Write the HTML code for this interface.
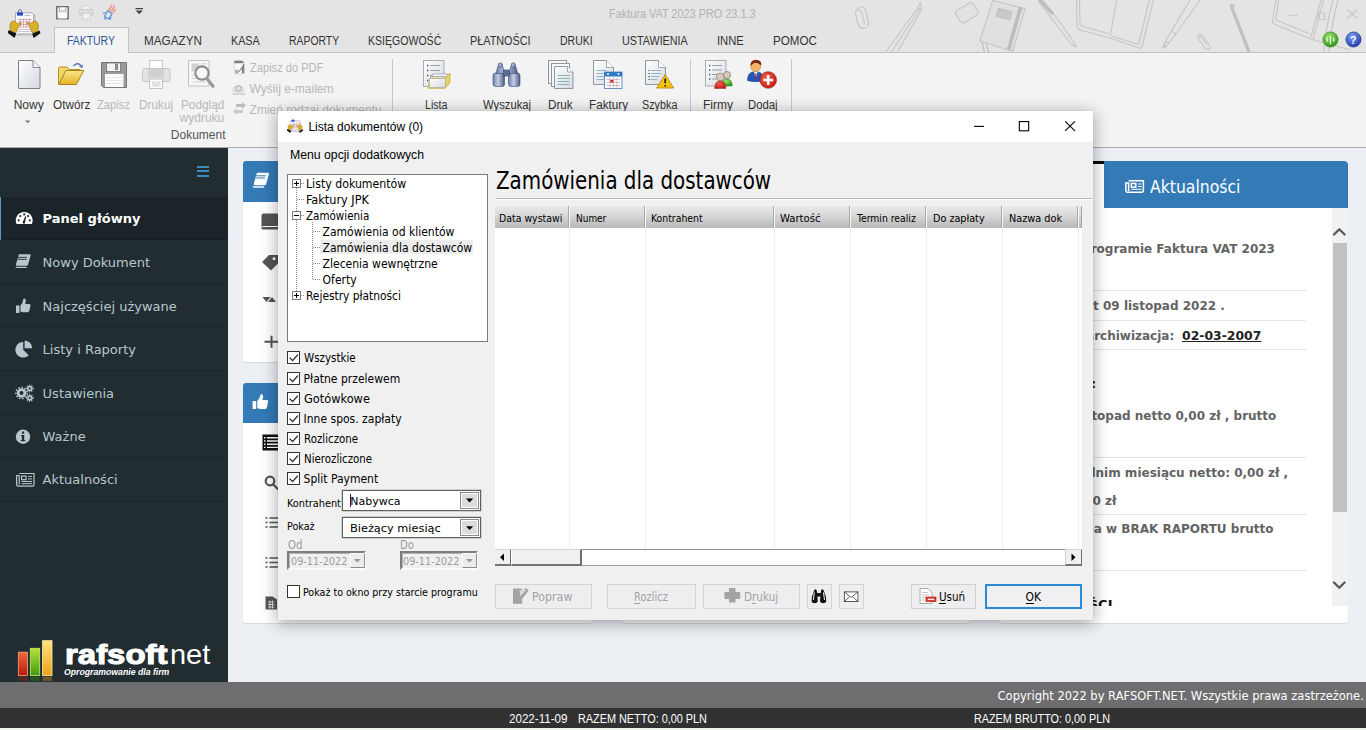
<!DOCTYPE html>
<html lang="pl">
<head>
<meta charset="utf-8">
<title>Faktura VAT 2023 PRO 23.1.3</title>
<style>
*{box-sizing:border-box;margin:0;padding:0}
html,body{width:1366px;height:730px;overflow:hidden}
body{position:relative;background:#ecf0f5;font-family:"Liberation Sans",sans-serif;font-size:12px;color:#222}
.t{position:absolute;white-space:nowrap;line-height:1}
.layer{position:absolute;left:0;top:0;width:1366px;height:730px;overflow:hidden}
svg{overflow:visible}
</style>
</head>
<body>
<div class="layer" id="ribbonwrap">
<div style="position:absolute;left:0px;top:0px;width:1366px;height:52px;background:#e4e4e4"></div>
<svg class="sk" style="position:absolute;left:0;top:0" width="1366" height="52" viewBox="0 0 1366 52"><g fill="none" stroke="#c6c6c6" stroke-width="1.150" stroke-linecap="round" stroke-linejoin="round">
<path d="M858 9 q5 -5 7.500 1 l2.500 10 q1.500 8 -4 8.500 q-5 0 -6.500 -6 l-2 -9 q0 -5 4 -3.500 q2 1 3 5 l2 9"/>
<path d="M886 52 L917.500 8 L920.500 2.500 L921.500 9.500 L897.600 52 M891.500 52 L919.500 9 M917.500 8 L921.500 9.500"/>
<path d="M957 10.500 l12 -7.500 q3 -1.500 5 1.500 l3.500 6 q1.500 3 -1 4.800 l-11.500 7 q-3 1.500 -5 -1.500 l-4 -6 q-1.500 -2.500 1 -4.300z" fill="#e1e1e1"/>
<path d="M992.700 .500 L1025 8.600 L1012.700 51.400 L979.800 41 Z" fill="#e0e0e0"/>
<path d="M1020.500 7.500 L1008.500 50.300" stroke="#bcbcbc" stroke-width="3.600" stroke-linecap="butt"/>
<path d="M998.500 8.300 l13.500 3.500 l-2.300 8 l-13.500 -3.500z" fill="#c9c9c9" stroke="#c2c2c2"/>
<path d="M982 42 l2.500 10 M986 43 l2.500 9" stroke="#bdbdbd"/>
<path d="M1042 0 L1053 13 L1074 42 L1076 47 L1071 44 L1049 15 L1039 2" />
<path d="M1040 0 L1052 13" stroke="#bdbdbd" stroke-width="3.500"/>
<path d="M1076.500 0 L1077 27 q.500 2 3 3 L1110 38 L1116.600 0 M1110 38 L1139 48 q2.500 .500 3.200 -2 L1153.400 0 M1079.500 0 L1080 25.500 L1108 33.500 M1113 36.500 L1138.500 44.500 L1149.500 0"/>
<path d="M1200 0 L1176 34 L1166 46.500 L1163 47.700 L1164 44 L1171.500 31 L1190 0 M1171.500 31 L1176 34 M1165.500 41 L1169 43.500"/>
<path d="M1163 47.700 L1166 46.500 L1164 44z" fill="#c4c4c4"/>
<path d="M1197 36.500 q3 -4 6 0 l6.500 9 q2 3.500 -1.500 4 q-2 0 -3.500 -2 l-6 -8.500 q-1 -2 1 -2.500 q1.500 0 2.500 1.500 l4.500 6.500"/>
<path d="M1232 8 L1249 52" stroke="#c0c0c0" stroke-width="3.400"/><path d="M1230.500 6 q1.500 -2 3.500 0" stroke="#c0c0c0" stroke-width="2"/>
<path d="M1275.800 0 L1272.600 21 q0 2.500 2 3.300 L1310.500 39 L1321 0 M1310.500 39 L1349.500 49.800 M1313 39.800 L1323.500 0 M1333 0 q-7 26 -9.500 52 M1338 0 q-7 26 -9 52 M1278.500 0 L1276 20 L1309 33.500"/>
<path d="M1288 15.200 h9.500 M1318 13 h6.600 v6.500 h-6.600z M1347.500 9.800 l9.500 8.600 m0 -8.600 l-9.500 8.600"/>
</g></svg>
<div style="position:absolute;left:0px;top:52px;width:1366px;height:95px;background:#f4f3f4;border-top:1px solid #c3c3c3"></div>
<div style="position:absolute;left:0px;top:147px;width:1366px;height:1px;background:#a9a9a9"></div>
<div style="position:absolute;left:54px;top:27px;width:75px;height:26px;background:#f4f3f4;border:1px solid #c3c3c3;border-bottom:none"></div>
<span class="t" style="left:67.3px;top:35.0px;font:12px 'Liberation Sans',sans-serif;line-height:1;color:#2b579a;transform:scaleX(0.869);transform-origin:0 0;">FAKTURY</span>
<span class="t" style="left:144.1px;top:35.0px;font:12px 'Liberation Sans',sans-serif;line-height:1;color:#333;transform:scaleX(0.976);transform-origin:0 0;">MAGAZYN</span>
<span class="t" style="left:231.3px;top:35.0px;font:12px 'Liberation Sans',sans-serif;line-height:1;color:#333;transform:scaleX(0.896);transform-origin:0 0;">KASA</span>
<span class="t" style="left:288.9px;top:35.0px;font:12px 'Liberation Sans',sans-serif;line-height:1;color:#333;transform:scaleX(0.867);transform-origin:0 0;">RAPORTY</span>
<span class="t" style="left:367.7px;top:35.0px;font:12px 'Liberation Sans',sans-serif;line-height:1;color:#333;transform:scaleX(0.879);transform-origin:0 0;">KSIĘGOWOŚĆ</span>
<span class="t" style="left:470.0px;top:35.0px;font:12px 'Liberation Sans',sans-serif;line-height:1;color:#333;transform:scaleX(0.903);transform-origin:0 0;">PŁATNOŚCI</span>
<span class="t" style="left:560.0px;top:35.0px;font:12px 'Liberation Sans',sans-serif;line-height:1;color:#333;transform:scaleX(0.873);transform-origin:0 0;">DRUKI</span>
<span class="t" style="left:622.2px;top:35.0px;font:12px 'Liberation Sans',sans-serif;line-height:1;color:#333;transform:scaleX(0.896);transform-origin:0 0;">USTAWIENIA</span>
<span class="t" style="left:717.2px;top:35.0px;font:12px 'Liberation Sans',sans-serif;line-height:1;color:#333;transform:scaleX(0.935);transform-origin:0 0;">INNE</span>
<span class="t" style="left:773.0px;top:35.0px;font:12px 'Liberation Sans',sans-serif;line-height:1;color:#333;transform:scaleX(0.966);transform-origin:0 0;">POMOC</span>
<span class="t" style="left:609.4px;top:8.0px;font:12px 'Liberation Sans',sans-serif;line-height:1;color:#b2b2b2;transform:scaleX(0.908);transform-origin:0 0;">Faktura VAT 2023 PRO 23.1.3</span>
<span class="t" style="left:13.7px;top:99.0px;font:12px 'Liberation Sans',sans-serif;line-height:1;color:#333;">Nowy</span>
<span class="t" style="left:52.7px;top:99.0px;font:12px 'Liberation Sans',sans-serif;line-height:1;color:#333;transform:scaleX(0.981);transform-origin:0 0;">Otwórz</span>
<span class="t" style="left:97.0px;top:99.0px;font:12px 'Liberation Sans',sans-serif;line-height:1;color:#b7b7b7;transform:scaleX(0.934);transform-origin:0 0;">Zapisz</span>
<span class="t" style="left:138.8px;top:99.0px;font:12px 'Liberation Sans',sans-serif;line-height:1;color:#b7b7b7;transform:scaleX(0.986);transform-origin:0 0;">Drukuj</span>
<span class="t" style="left:180.7px;top:99.0px;font:12px 'Liberation Sans',sans-serif;line-height:1;color:#b7b7b7;transform:scaleX(0.983);transform-origin:0 0;">Podgląd</span>
<span class="t" style="left:179.6px;top:112.0px;font:12px 'Liberation Sans',sans-serif;line-height:1;color:#b7b7b7;">wydruku</span>
<span class="t" style="left:170.8px;top:129.0px;font:12px 'Liberation Sans',sans-serif;line-height:1;color:#555;">Dokument</span>
<span class="t" style="left:249.6px;top:62.0px;font:12px 'Liberation Sans',sans-serif;line-height:1;color:#b7b7b7;transform:scaleX(0.925);transform-origin:0 0;">Zapisz do PDF</span>
<span class="t" style="left:249.6px;top:83.0px;font:12px 'Liberation Sans',sans-serif;line-height:1;color:#b7b7b7;">Wyślij e-mailem</span>
<span class="t" style="left:249.6px;top:104.0px;font:12px 'Liberation Sans',sans-serif;line-height:1;color:#b7b7b7;">Zmień rodzaj dokumentu</span>
<span class="t" style="left:424.8px;top:99.0px;font:12px 'Liberation Sans',sans-serif;line-height:1;color:#333;transform:scaleX(0.887);transform-origin:0 0;">Lista</span>
<span class="t" style="left:482.5px;top:99.0px;font:12px 'Liberation Sans',sans-serif;line-height:1;color:#333;transform:scaleX(0.939);transform-origin:0 0;">Wyszukaj</span>
<span class="t" style="left:548.0px;top:99.0px;font:12px 'Liberation Sans',sans-serif;line-height:1;color:#333;transform:scaleX(0.975);transform-origin:0 0;">Druk</span>
<span class="t" style="left:589.0px;top:99.0px;font:12px 'Liberation Sans',sans-serif;line-height:1;color:#333;transform:scaleX(0.975);transform-origin:0 0;">Faktury</span>
<span class="t" style="left:642.4px;top:99.0px;font:12px 'Liberation Sans',sans-serif;line-height:1;color:#333;transform:scaleX(0.899);transform-origin:0 0;">Szybka</span>
<span class="t" style="left:703.0px;top:99.0px;font:12px 'Liberation Sans',sans-serif;line-height:1;color:#333;">Firmy</span>
<span class="t" style="left:747.5px;top:99.0px;font:12px 'Liberation Sans',sans-serif;line-height:1;color:#333;transform:scaleX(0.941);transform-origin:0 0;">Dodaj</span>
<div style="position:absolute;left:391.5px;top:59px;width:1px;height:66px;background:#c9c9c9"></div>
<div style="position:absolute;left:690px;top:59px;width:1px;height:66px;background:#c9c9c9"></div>
<div style="position:absolute;left:791.3px;top:59px;width:1px;height:66px;background:#c9c9c9"></div>
<svg style="position:absolute;left:0;top:0" width="1366" height="148" viewBox="0 0 1366 148">
<defs>
<linearGradient id="gpage" x1="0" y1="0" x2="1" y2="1"><stop offset="0" stop-color="#ffffff"/><stop offset="1" stop-color="#d3d8df"/></linearGradient>
<linearGradient id="gfold" x1="0" y1="0" x2="0" y2="1"><stop offset="0" stop-color="#fbe58a"/><stop offset="1" stop-color="#e6b422"/></linearGradient>
<linearGradient id="gbino" x1="0" y1="0" x2="1" y2="0"><stop offset="0" stop-color="#6f7fa8"/><stop offset=".45" stop-color="#c5cde3"/><stop offset="1" stop-color="#4d5c88"/></linearGradient>
<radialGradient id="gred" cx=".4" cy=".35" r=".7"><stop offset="0" stop-color="#f0604f"/><stop offset="1" stop-color="#c4160c"/></radialGradient>
<radialGradient id="ggreen" cx=".4" cy=".3" r=".7"><stop offset="0" stop-color="#9fe36a"/><stop offset="1" stop-color="#2f9a16"/></radialGradient>
<radialGradient id="gblue" cx=".4" cy=".3" r=".7"><stop offset="0" stop-color="#7fa3ee"/><stop offset="1" stop-color="#1f3fb0"/></radialGradient>
</defs>
<!-- app icon -->
<g>
<path d="M19 14 h14 l2 1.500 v19 h-16z" fill="#e6e6ea" stroke="#9a9aa8" stroke-width=".700"/>
<path d="M15.500 12.800 h16.500 l1.500 1.500 v20.500 h-18z" fill="#fafafc" stroke="#9a9aa8" stroke-width=".800"/>
<rect x="17" y="12.400" width="6" height="3.200" fill="#2446c8"/><path d="M18.400 12.300 v-1.500 q1.600 -3 3.200 0 v1.500" fill="none" stroke="#4a5a8a" stroke-width="1"/>
<path d="M24.500 15.500 h6" stroke="#9ab" stroke-width=".800"/>
<path d="M18 19.500 h13.500 M18 22 h13.500 M18 24.500 h13.500 M18 27 h13.500 M20.500 18.500 v9 M23.500 18.500 v9 M26.500 18.500 v9 M29.500 18.500 v9" stroke="#cf8f9f" stroke-width=".700"/>
<path d="M18 29.500 h13.500 M18 31.500 h13.500 M18 33.500 h13.500" stroke="#b9b9bf" stroke-width=".800"/>
<path d="M9.800 27 q.200 -5.500 3.300 -6 q2.500 0 4.500 2.800 l3.300 -1.500 l.500 1.200 l-2.800 3 l-2.600 6.500 l-5.200 -1.800z" fill="#d9b02a" stroke="#8f7010" stroke-width=".600"/>
<path d="M38.500 27 q-.200 -5.500 -3.300 -6 q-2.500 0 -4.500 2.800 l-3.300 -1.500 l-.500 1.200 l2.800 3 l2.600 6.500 l5.200 -1.800z" fill="#d9b02a" stroke="#8f7010" stroke-width=".600"/>
<path d="M8.600 30 l7.700 3.500 l-1.800 4.400 l-6.700 -5z M39.800 30.500 l-7.700 3.300 l1.600 4.200 l6.700 -4.800z" fill="#141414"/>
</g>
<!-- QAT -->
<g opacity=".85"><rect x="56.700" y="6.700" width="11.500" height="12" fill="#ececec" stroke="#5c5c5c" stroke-width="1.400"/><rect x="59.5" y="7" width="6" height="4" fill="#fff" stroke="#777" stroke-width=".6"/><rect x="58.5" y="13" width="8" height="5.5" fill="#fff"/></g>
<g opacity=".55"><rect x="82" y="6" width="8" height="4" fill="#fff" stroke="#aaa" stroke-width=".6"/><rect x="79.5" y="9.5" width="13.5" height="6" rx="1" fill="#d6d6d6" stroke="#aaa" stroke-width=".6"/><rect x="82.5" y="13.5" width="7.5" height="5.5" fill="#fff" stroke="#aaa" stroke-width=".6"/></g>
<g stroke-width="1.300" fill="none" opacity=".9"><path d="M104.500 16.500 l3 -5.500 l4.500 2.500 l-3 5.500z M103 13.500 l2.500 -1 M110 19.500 l1 -2.300 M106 19.500 l-1.800 -1.200" stroke="#4a8ee0"/><path d="M108.500 11 l3.500 -6 M111 12.300 l3.500 -6.500 M113.300 13 l2 -4" stroke="#f08a7a" stroke-width="1.500"/></g>
<path d="M135.5 8 h7.5 v1.2 h-7.5z M135.6 10.6 h7.3 l-3.65 3.6z" fill="#444"/>
<!-- right small buttons -->
<circle cx="1330.5" cy="39.5" r="7.6" fill="url(#ggreen)" stroke="#2a7a12" stroke-width=".6"/><path d="M1330.5 36 v8 M1327.6 37.5 q-1.4 2 0 4 M1333.4 37.5 q1.4 2 0 4" stroke="#fff" stroke-width="1.1" fill="none"/>
<circle cx="1353.5" cy="39.5" r="7.6" fill="url(#gblue)" stroke="#1a2f86" stroke-width=".6"/>
<!-- Nowy -->
<path d="M18.5 60.5 h14.5 l7 7 v21 h-21.5z" fill="url(#gpage)" stroke="#7d7f86"/><path d="M33 60.5 v7 h7" fill="#f3f4f7" stroke="#7d7f86" stroke-width=".9"/>
<path d="M25 120.4 h5.4 l-2.7 2.8z" fill="#7a7a7a"/>
<!-- Otworz -->
<path d="M58.5 84 v-15.5 q0 -1.5 1.5 -1.5 h7 l2.5 2.5 h10.5 v3" fill="#f3d667" stroke="#a98516" stroke-width=".9"/>
<path d="M58.8 84.5 l7 -14 h18 l-7.5 14z" fill="url(#gfold)" stroke="#9b7a12" stroke-width=".9"/>
<path d="M73.5 66 q4.5 -5 8 .5" fill="none" stroke="#6c86b8" stroke-width="1.6"/><path d="M79 66.8 l3.6 1.4 l.4 -4z" fill="#6c86b8"/>
<!-- Zapisz -->
<g><path d="M101.5 62.5 h25 v25 h-23 l-2 -2z" fill="#9a9a9a" stroke="#777"/><rect x="106.5" y="63" width="14" height="8.5" fill="#f3f3f3" stroke="#666" stroke-width=".7"/><rect x="115" y="63.6" width="3" height="6.5" fill="#8a8a8a"/><rect x="105" y="74" width="18.5" height="13" fill="#fbfbfb"/><path d="M106 77.5 h16.5 M106 80.5 h16.5 M106 83.5 h16.5" stroke="#e2e2e2" stroke-width=".8"/></g>
<!-- Drukuj -->
<g><rect x="149.5" y="60.5" width="13" height="8" fill="#fff" stroke="#c9c9c9"/><rect x="142.500" y="68.500" width="27.500" height="13" rx="2" fill="#e3e3e3" stroke="#c6c6c6"/><rect x="148" y="69" width="16" height="8.5" fill="#cfcfcf"/><rect x="149.5" y="79" width="13" height="9.500" fill="#fbfbfb" stroke="#c4c4c4"/><rect x="152" y="81.500" width="8.500" height="5" fill="#dcdcdc"/><path d="M152 86.500 l4 -4 l4.500 4" stroke="#f6f6f6" fill="none"/></g>
<!-- Podglad -->
<g><rect x="188.5" y="60.5" width="20.500" height="25.500" fill="#f7f7f7" stroke="#c2c2c2"/><rect x="191.5" y="63.500" width="7.500" height="8" fill="#d2d2d2"/><path d="M200.5 63.800 h6 M191.5 75 h14 M191.5 78.500 h14 M191.5 82 h14" stroke="#d3d3d3" stroke-width="1"/><circle cx="202" cy="73" r="6.600" fill="#f9f9f9" fill-opacity=".8" stroke="#8d8d8d" stroke-width="2.100"/><path d="M206.800 78.600 l6.200 7.600" stroke="#9a9a9a" stroke-width="3.200" stroke-linecap="round"/></g>
<!-- small disabled icons -->
<g fill="#bcbcbc"><path d="M234.300 60.800 h8 l2.300 2.300 v10.700 h-10.300z" fill="#fbfbfb" stroke="#cfcfcf" stroke-width=".700"/><path d="M234.300 60.800 h8 l1.500 1.500 v.900 h-9.500z" fill="#808080"/><path d="M235 73.200 q5.500 -2.500 8.500 -9.500 l.600 .300 v9.200 h-2.200 v-4.500 q-2 3 -4.600 4.500z" fill="#7e7e7e"/><path d="M235 70.500 l3.500 -1.200 l-2.800 3.600z" fill="#8a8a8a"/>
<ellipse cx="238.500" cy="90" rx="6.500" ry="5" fill="#e3e3e3"/><circle cx="238.500" cy="88.500" r="2.700" fill="none" stroke="#a9a9a9" stroke-width="1"/><rect x="232.500" y="93.500" width="13" height="1.500" fill="#d0d0d0"/>
<path d="M236 104 h6 v-2 l4 3.500 l-4 3.500 v-2 h-6z" fill="#bdbdbd"/><path d="M243 110 h-6 v-2 l-4 3.500 l4 3.500 v-2 h6z" fill="#c9c9c9"/></g>
<!-- Lista -->
<g><rect x="423.500" y="60.500" width="20.500" height="26" fill="url(#gpage)" stroke="#a9adb3"/><path d="M430 65.500 h10 M430 70.500 h10 M430 75.500 h6" stroke="#9a9fa8" stroke-width="1"/><path d="M427 65.500 h1.300 M427 70.500 h1.300 M427 75.500 h1.300 M427 80.500 h1.300" stroke="#444" stroke-width="1.300"/>
<path d="M432.500 74 h15 v10 h-15z" fill="#f4f5f8" stroke="#9ea2ab" stroke-width=".8"/><path d="M430.500 76.500 h15 v10 h-15z" fill="#f8f8fa" stroke="#9ea2ab" stroke-width=".8"/>
<path d="M428 88.300 l2 -10.300 h15.500 l4.500 -5 v10 l-5 5.300z" fill="#e9d45f" stroke="#bca62c" stroke-width=".7"/><path d="M429.500 78.500 h16 v9 h-16z" fill="url(#gpage)" stroke="#a5a59a" stroke-width=".6"/></g>
<!-- Wyszukaj -->
<g stroke="#3d4a75" stroke-width=".6"><rect x="493" y="73" width="11.500" height="13.500" rx="2.500" fill="url(#gbino)"/><rect x="508.500" y="73" width="11.500" height="13.500" rx="2.500" fill="url(#gbino)"/><path d="M496 73.500 l1.800 -7 h5 l1.800 7z M509 73.500 l1.800 -7 h5 l1.800 7z" fill="url(#gbino)"/><rect x="498.300" y="63" width="4" height="4" rx="1.500" fill="url(#gbino)"/><rect x="511.300" y="63" width="4" height="4" rx="1.500" fill="url(#gbino)"/><rect x="503.500" y="70" width="6" height="6" fill="#5e6c98"/></g>
<!-- Druk -->
<g stroke="#8f979c" stroke-width="1"><rect x="548.500" y="60.500" width="18" height="23" fill="#f6f7f8"/><rect x="551.500" y="63.500" width="18" height="23" fill="#f6f7f8"/><path d="M554.500 66.500 h13 l5.500 5.500 v16.500 h-18.500z" fill="url(#gpage)"/><path d="M567.500 66.500 v5.500 h5.500" fill="#fff" stroke-width=".8"/></g><path d="M557.500 75.500 h12 M557.500 78.500 h12 M557.500 81.500 h12 M557.500 84.500 h12" stroke="#7fb5b5" stroke-width="1"/>
<!-- Faktury -->
<g><path d="M593.500 60.500 h13 l7 7 v17 h-20z" fill="url(#gpage)" stroke="#8f979c"/><path d="M606.500 60.500 v7 h7" fill="#fff" stroke="#8f979c" stroke-width=".8"/><path d="M596.500 70.500 h10 M596.500 73.500 h8 M596.500 76.500 h8 M596.500 79.500 h8" stroke="#8fb7c9" stroke-width="1"/>
<rect x="604.500" y="72" width="17.500" height="16.500" fill="#fafbfd" stroke="#5c88b8" stroke-width=".9"/><rect x="604.500" y="72" width="17.500" height="4.500" fill="#2f78c2"/><circle cx="608" cy="74" r="1" fill="#fff"/><circle cx="618.500" cy="74" r="1" fill="#fff"/>
<path d="M606.500 79.500 h13.500 M606.500 82.500 h13.500 M606.500 85.500 h13.500 M610 77.500 v10 M613.500 77.500 v10 M617 77.500 v10" stroke="#c9a2b0" stroke-width=".7"/><rect x="610.300" y="80" width="3" height="2.500" fill="#d22"/></g>
<!-- Szybka -->
<g><path d="M645.500 60.500 h13 l7 7 v17 h-20z" fill="url(#gpage)" stroke="#8f979c"/><path d="M658.500 60.500 v7 h7" fill="#fff" stroke="#8f979c" stroke-width=".8"/><path d="M651 70.500 h10 M651 73.500 h10 M651 76.500 h8 M651 79.500 h6" stroke="#8fb7c9" stroke-width="1"/><path d="M648.500 70.500 h1.200 M648.500 73.500 h1.200 M648.500 76.500 h1.200 M648.500 79.500 h1.200" stroke="#333" stroke-width="1.200"/>
<path d="M665.200 74.500 l8.500 13.500 h-17z" fill="#f5c211" stroke="#b98a06" stroke-width=".9" stroke-linejoin="round"/><path d="M665.200 78.500 v4.800 M665.200 85 v1.400" stroke="#222" stroke-width="1.700"/></g>
<!-- Firmy -->
<g><rect x="705.500" y="60.500" width="20.500" height="25.500" fill="url(#gpage)" stroke="#a9adb3"/><path d="M712 65.500 h10 M712 70 h10 M712 74.500 h6 M712 79 h4" stroke="#9a9fa8" stroke-width="1"/><path d="M709 65.500 h1.300 M709 70 h1.300 M709 74.500 h1.300 M709 79 h1.300" stroke="#444" stroke-width="1.300"/>
<circle cx="727" cy="75" r="3.600" fill="#d8c7b5" stroke="#777" stroke-width=".7"/><path d="M721.800 86 q0 -7 5.200 -7 q5.200 0 5.200 7z" fill="url(#ggreen)" stroke="#2f7a22" stroke-width=".5"/>
<circle cx="720.200" cy="77" r="3.800" fill="#dccbb8" stroke="#777" stroke-width=".7"/><path d="M714.600 88.500 q0 -7.500 5.600 -7.500 q5.600 0 5.600 7.500z" fill="url(#gred)" stroke="#a22" stroke-width=".5"/></g>
<!-- Dodaj -->
<g><path d="M747.500 80.500 q0 -7.500 5 -8.500 h6 q5 1 5 8.500 q-8 2.500 -16 0z" fill="#2457b5" stroke="#173a80" stroke-width=".6"/><path d="M754 72 l1.800 6 l1.800 -6z" fill="#fff"/><path d="M755.800 73 v6" stroke="#a12" stroke-width="1"/>
<circle cx="755.700" cy="66.500" r="5" fill="#f6b26b" stroke="#b8742a" stroke-width=".5"/><path d="M750.500 66 q-.5 -6 5.500 -6.300 q6 .3 5.200 5.800 q-4 -3.500 -7 -2.500 q-2 1 -3.700 3z" fill="#7c2a14"/>
<circle cx="768.200" cy="80" r="8.300" fill="url(#gred)" stroke="#9c120a" stroke-width=".6"/><path d="M768.200 75 v10 M763.200 80 h10" stroke="#fff" stroke-width="2.600"/></g>
</svg>
<span class="t" style="left:1350.3px;top:35.0px;font:bold 11px 'Liberation Sans',sans-serif;line-height:1;color:#fff;transform:scaleX(0.950);transform-origin:0 0;">?</span>
</div>
<div class="layer" id="sidebar">
<div style="position:absolute;left:0px;top:148px;width:228px;height:534px;background:#222d32"></div>
<div style="position:absolute;left:197px;top:166.3px;width:12.3px;height:2px;background:#3c8dbc"></div>
<div style="position:absolute;left:197px;top:170.4px;width:12.3px;height:2px;background:#3c8dbc"></div>
<div style="position:absolute;left:197px;top:174.5px;width:12.3px;height:2px;background:#3c8dbc"></div>
<div style="position:absolute;left:0px;top:196.8px;width:228px;height:43.55px;background:#1b2428;border-bottom:1px solid #161d21"></div>
<div style="position:absolute;left:0px;top:196.8px;width:1.3px;height:43.55px;background:#5a9cc4"></div>
<span class="t" style="left:42.6px;top:212.0px;font:bold 13px 'DejaVu Sans',sans-serif;line-height:1;color:#fff;">Panel główny</span>
<div style="position:absolute;left:0px;top:240.35px;width:228px;height:43.55px;border-bottom:1px solid #1a2327"></div>
<span class="t" style="left:42.6px;top:256.0px;font:13px 'DejaVu Sans',sans-serif;line-height:1;color:#b8c7ce;">Nowy Dokument</span>
<div style="position:absolute;left:0px;top:283.9px;width:228px;height:43.55px;border-bottom:1px solid #1a2327"></div>
<span class="t" style="left:42.6px;top:300.0px;font:13px 'DejaVu Sans',sans-serif;line-height:1;color:#b8c7ce;">Najczęściej używane</span>
<div style="position:absolute;left:0px;top:327.45px;width:228px;height:43.55px;border-bottom:1px solid #1a2327"></div>
<span class="t" style="left:42.6px;top:343.0px;font:13px 'DejaVu Sans',sans-serif;line-height:1;color:#b8c7ce;">Listy i Raporty</span>
<div style="position:absolute;left:0px;top:371px;width:228px;height:43.55px;border-bottom:1px solid #1a2327"></div>
<span class="t" style="left:42.6px;top:387.0px;font:13px 'DejaVu Sans',sans-serif;line-height:1;color:#b8c7ce;">Ustawienia</span>
<div style="position:absolute;left:0px;top:414.55px;width:228px;height:43.55px;border-bottom:1px solid #1a2327"></div>
<span class="t" style="left:42.6px;top:430.0px;font:13px 'DejaVu Sans',sans-serif;line-height:1;color:#b8c7ce;">Ważne</span>
<div style="position:absolute;left:0px;top:458.1px;width:228px;height:43.55px;border-bottom:1px solid #1a2327"></div>
<span class="t" style="left:42.6px;top:473.0px;font:13px 'DejaVu Sans',sans-serif;line-height:1;color:#b8c7ce;">Aktualności</span>
<svg style="position:absolute;left:0;top:0" width="228" height="682" viewBox="0 0 228 682">
<g fill="#fff"><path d="M16.600 224.1 A8.450 8.450 0 1 1 31.800 224.1 z"/></g>
<g fill="#1b2428"><circle cx="18.600" cy="220.3" r="1.100"/><circle cx="20.300" cy="216.1" r="1.100"/><circle cx="24.200" cy="214.4" r="1.100"/><circle cx="28.100" cy="216.1" r="1.100"/><circle cx="29.800" cy="220.3" r="1.100"/><path d="M22.600 222.6 l2.600 -6.300 l1 .400 l-1.400 6.500 q-1 1.400 -2.200 -.600z"/></g>
<g fill="#b8c7ce">
<path d="M19.500 254.35 h10.500 q1 0 .700 1 l-2.700 9.500 q-.300 1 -1.300 1 h-9.700 q-1.300 0 -1 -1.500 l2.500 -8.700 q.300 -1.300 1 -1.300z"/>
<path d="M16.500 266.85 h10 l.300 1.100 h-10.300 q-1 0 -1 -1 z" />
<path d="M16 305.4 h3.400 v7.500 h-3.400z M20.400 305.4 q2.500 -2 3 -6.300 q.300 -.800 1.300 -.500 q1.600 .800 1 3.300 l-.500 2 h4.300 q1.300 .300 1 1.700 l-1.200 5.500 q-.400 1.100 -1.600 1.100 h-5 l-2.300 -.800z"/>
<path d="M23.200 341.95 v7.800 l5.500 5.500 a7.800 7.800 0 1 1 -5.500 -13.300z"/><path d="M24.600 340.45 a7.800 7.800 0 0 1 7.600 7.800 h-7.600z"/>
<circle cx="21.500" cy="393" r="4.700"/><circle cx="29.800" cy="388.5" r="2.700"/><circle cx="29.800" cy="398" r="2.700"/>
<circle cx="23" cy="436.75" r="7.200"/>
</g>
<g fill="none" stroke="#b8c7ce" stroke-width="1.500" stroke-dasharray="1.600 1.600"><circle cx="21.500" cy="393" r="5.600"/></g>
<g fill="none" stroke="#b8c7ce" stroke-width="1.200" stroke-dasharray="1.200 1.200"><circle cx="29.800" cy="388.5" r="3.300"/><circle cx="29.800" cy="398" r="3.300"/></g>
<g fill="#222d32"><circle cx="21.500" cy="393" r="2"/><circle cx="29.800" cy="388.5" r="1.100"/><circle cx="29.800" cy="398" r="1.100"/>
<path d="M18 257.35 h9 M17.600 259.35 h9" stroke="#222d32" stroke-width=".900"/>
<rect x="22" y="431.55" width="2.200" height="2.200"/><path d="M21 435.05 h3.200 v5 h1 v1.300 h-4.400 v-1.300 h1.100 v-3.700 h-.900z"/></g>
<g fill="none" stroke="#b8c7ce" stroke-width="1.200"><path d="M19.200 473.5 h14.800 v11.200 q0 1.400 -1.400 1.400 h-14.400 q-1.600 0 -1.600 -1.600 v-9 h2.600 v9"/><rect x="21.600" y="476.1" width="4.400" height="3.600"/><path d="M28 476.4 h4 M28 478.9 h4 M21.600 481.5 h10.400 M21.600 483.7 h10.400" stroke-width="1"/></g>
</svg>
<svg style="position:absolute;left:0;top:0" width="228" height="682" viewBox="0 0 228 682"><defs>
<linearGradient id="lr" x1="0" y1="0" x2="0" y2="1"><stop offset="0" stop-color="#f26a3a"/><stop offset="1" stop-color="#b81a10"/></linearGradient>
<linearGradient id="lgn" x1="0" y1="0" x2="0" y2="1"><stop offset="0" stop-color="#b6e23a"/><stop offset="1" stop-color="#3f9a12"/></linearGradient>
<linearGradient id="ly" x1="0" y1="0" x2="0" y2="1"><stop offset="0" stop-color="#ffe27a"/><stop offset="1" stop-color="#f0a21a"/></linearGradient></defs>
<rect x="18.300" y="652.200" width="9.200" height="23.300" fill="url(#lr)" stroke="#f6a27a" stroke-width=".800"/>
<rect x="30.300" y="648.300" width="9.400" height="27.200" fill="url(#lgn)" stroke="#c9ee6a" stroke-width=".800"/>
<rect x="42.600" y="640.700" width="9.400" height="34.800" fill="url(#ly)" stroke="#ffefb0" stroke-width=".800"/>
<rect x="18.300" y="676.500" width="9.200" height="4.500" fill="#b81a10" opacity=".35"/><rect x="30.300" y="676.500" width="9.400" height="4.500" fill="#3f9a12" opacity=".35"/><rect x="42.600" y="676.500" width="9.400" height="4.500" fill="#f0a21a" opacity=".35"/></svg>
<span class="t" style="left:65.2px;top:641.0px;font:bold 28px 'Liberation Sans',sans-serif;line-height:1;color:#fff;transform:scaleX(1.176);transform-origin:0 0;-webkit-text-stroke:1.100px #fff;">rafsoft</span>
<span class="t" style="left:169.5px;top:641.0px;font:28px 'Liberation Sans',sans-serif;line-height:1;color:#fff;transform:scaleX(1.035);transform-origin:0 0;">net</span>
<span class="t" style="left:63.8px;top:668.0px;font:italic bold 8.500px 'Liberation Sans',sans-serif;line-height:1;color:#fff;transform:scaleX(1.023);transform-origin:0 0;">Oprogramowanie dla firm</span>
</div>
<div class="layer" id="content">
<div style="position:absolute;left:243px;top:161px;width:348.5px;height:201px;background:#fff;border-radius:3px;box-shadow:0 1px 1px rgba(0,0,0,.1)"></div>
<div style="position:absolute;left:243px;top:161px;width:348.5px;height:40.6px;background:#337ab7;border-radius:3px 3px 0 0"></div>
<div style="position:absolute;left:243px;top:383px;width:348.5px;height:240px;background:#fff;border-radius:3px;box-shadow:0 1px 1px rgba(0,0,0,.1)"></div>
<div style="position:absolute;left:243px;top:383px;width:348.5px;height:40px;background:#337ab7;border-radius:3px 3px 0 0"></div>
<div style="position:absolute;left:621.5px;top:161px;width:348.5px;height:462px;background:#fff;border-radius:3px;box-shadow:0 1px 1px rgba(0,0,0,.1)"></div>
<div style="position:absolute;left:1000px;top:161px;width:348px;height:462px;background:#fff;border-radius:3px;box-shadow:0 1px 1px rgba(0,0,0,.1)"></div>
<div style="position:absolute;left:1000px;top:161px;width:104px;height:2.5px;background:#0a0a0a"></div>
<div style="position:absolute;left:1104px;top:161px;width:244px;height:47px;background:#337ab7;border-radius:0 4px 0 0"></div>
<div style="position:absolute;left:1331.5px;top:208px;width:16.5px;height:397.5px;background:#f1f1f1"></div>
<div style="position:absolute;left:1333px;top:243px;width:13.5px;height:268.5px;background:#c1c1c1"></div>
<span class="t" style="left:1011.1px;top:243.0px;font:bold 12px 'DejaVu Sans',sans-serif;line-height:1;color:#636363;">Witamy w programie Faktura VAT 2023</span>
<span class="t" style="left:1025.0px;top:300.0px;font:bold 12px 'DejaVu Sans',sans-serif;line-height:1;color:#636363;">Dzisiaj jest 09 listopad 2022 .</span>
<span class="t" style="left:1182.4px;top:330.0px;font:bold 12px 'DejaVu Sans',sans-serif;line-height:1;color:#222;transform:scaleX(1.034);transform-origin:0 0;text-decoration:underline;">02-03-2007</span>
<span class="t" style="left:1024.2px;top:330.0px;font:bold 12px 'DejaVu Sans',sans-serif;line-height:1;color:#636363;">Ostatnia archiwizacja:</span>
<span class="t" style="left:1022.4px;top:378.0px;font:bold 12px 'DejaVu Sans',sans-serif;line-height:1;color:#222;">Statystyki:</span>
<span class="t" style="left:930.7px;top:410.0px;font:bold 12px 'DejaVu Sans',sans-serif;line-height:1;color:#636363;">Sprzedaż w miesiącu listopad netto 0,00 zł , brutto</span>
<span class="t" style="left:959.1px;top:467.0px;font:bold 12px 'DejaVu Sans',sans-serif;line-height:1;color:#636363;">Sprzedaż w poprzednim miesiącu netto: 0,00 zł ,</span>
<span class="t" style="left:1024.2px;top:495.0px;font:bold 12px 'DejaVu Sans',sans-serif;line-height:1;color:#636363;">brutto 0,00 zł</span>
<span class="t" style="left:922.4px;top:523.0px;font:bold 12px 'DejaVu Sans',sans-serif;line-height:1;color:#636363;">Ostatnia sprzedaż dzienna w BRAK RAPORTU brutto</span>
<div style="position:absolute;left:1015px;top:290px;width:290.5px;height:1px;background:#e3e3ea"></div>
<div style="position:absolute;left:1015px;top:319.5px;width:290.5px;height:1px;background:#e3e3ea"></div>
<div style="position:absolute;left:1015px;top:349.2px;width:290.5px;height:1px;background:#e3e3ea"></div>
<div style="position:absolute;left:1015px;top:456.9px;width:290.5px;height:1px;background:#e3e3ea"></div>
<div style="position:absolute;left:1015px;top:514px;width:290.5px;height:1px;background:#e3e3ea"></div>
<div style="position:absolute;left:1015px;top:570.4px;width:290.5px;height:1px;background:#e3e3ea"></div>
<div style="position:absolute;left:0;top:0;width:1366px;height:605.5px;overflow:hidden"><span class="t" style="left:1013.7px;top:598.0px;font:bold 13px 'DejaVu Sans',sans-serif;line-height:1;color:#111;">WIADOMOŚCI</span></div>
<svg style="position:absolute;left:0;top:0" width="1366" height="682" viewBox="0 0 1366 682">
<g fill="none" stroke="#fff" stroke-width="1.500"><path d="M1128.600 180.800 h14.800 v10 q0 1.400 -1.400 1.400 h-14.600 q-1.600 0 -1.600 -1.600 v-7.600 h2.800 v8"/><rect x="1131.300" y="183.500" width="4.500" height="3.600"/><path d="M1138 184 h3.600 M1138 186.500 h3.600 M1131.300 189.300 h10.300" stroke-width="1.100"/></g>
<g fill="none" stroke="#555" stroke-width="2.200" stroke-linecap="round" stroke-linejoin="round"><path d="M1334 234.500 l5.300 -5.300 l5.300 5.300"/><path d="M1334 582.500 l5.300 5.300 l5.300 -5.300"/></g>
<!-- left panel icons -->
<g fill="#fff"><path d="M257.500 172.800 h10.800 q1 0 .700 1 l-2.900 10.500 q-.300 1 -1.300 1 h-10 q-1.300 0 -1 -1.500 l2.700 -9.700 q.300 -1.300 1 -1.300z"/><path d="M253.500 186.300 h10.500 l.300 1.400 h-10.800 q-1 0 -1 -1.100z"/>
<path d="M252.600 401 h3.600 v8 h-3.600z M257.300 401 q2.600 -2.100 3.200 -6.200 q.300 -.900 1.400 -.500 q1.700 .800 1.100 3.500 l-.600 2.200 h4.600 q1.400 .300 1.100 1.800 l-1.300 5.900 q-.400 1.200 -1.700 1.200 h-5.300 l-2.500 -.900z"/></g>
<path d="M256 175.800 h9.500 M255.500 178 h9.500" stroke="#337ab7" stroke-width="1"/>
<g fill="#555"><path d="M263.500 213.400 h17 v12.500 h-17 q-2 0 -2 2 v-12.500 q0 -2 2 -2z"/><path d="M263.500 227 h17 v2.500 h-17 q-2 0 -2 -1.300 q0 -1.200 2 -1.200z"/>
<path d="M262 262 l7 -7 h9 v8.500 l-7 7z M274 257.300 a1.500 1.500 0 1 0 .1 0z" fill-rule="evenodd"/>
<path d="M262.500 297 h8 l-4 5z M268 302 l4 -5 l4 5z"/>
<path d="M264.500 340.700 h13.500 v2 h-13.500z M270.500 335.700 h2 v12 h-2z"/></g>
<g fill="#111"><rect x="262.500" y="434.500" width="17" height="16"/></g>
<path d="M267 437.800 h12 M267 441 h12 M267 444.200 h12 M267 447.400 h12" stroke="#fff" stroke-width="1.400"/><path d="M264 437.800 h1.500 M264 441 h1.500 M264 444.200 h1.500 M264 447.400 h1.500" stroke="#fff" stroke-width="1.400"/>
<g fill="none" stroke="#555" stroke-width="2.200"><circle cx="270" cy="481" r="4.300"/><path d="M273.300 484.500 l4.500 4.500" stroke-linecap="round"/></g>
<g stroke="#555" stroke-width="1.500"><path d="M269.500 518 h9 M269.500 522.500 h9 M269.500 527 h9 M269.500 558 h9 M269.500 562.500 h9 M269.500 567 h9"/><path d="M265.500 518 h2 M265.500 522.500 h2 M265.500 527 h2 M265.500 558 h2 M265.500 562.500 h2 M265.500 567 h2"/></g>
<g fill="#555"><path d="M265.500 596.500 h7 l4.500 3 v10 h-11.500z"/></g><path d="M268 602 h6.500 M268 604.500 h6.500 M268 607 h6.500 M270 600.500 v8 M272.500 600.500 v8" stroke="#fff" stroke-width=".700"/>
</svg>
<span class="t" style="left:1149.6px;top:178.0px;font:18px 'DejaVu Sans Condensed',sans-serif;line-height:1;color:#fff;transform:scaleX(0.967);transform-origin:0 0;">Aktualności</span>
</div>
<div class="layer" id="footer">
<div style="position:absolute;left:0px;top:682px;width:1366px;height:26px;background:#6e6e70"></div>
<div style="position:absolute;left:0px;top:708px;width:1366px;height:19.5px;background:#323132"></div>
<div style="position:absolute;left:0px;top:727.5px;width:1366px;height:2.5px;background:#eef3e8"></div>
<span class="t" style="left:997.6px;top:691.0px;font:11.5px 'DejaVu Sans',sans-serif;line-height:1;color:#fff;">Copyright 2022 by RAFSOFT.NET. Wszystkie prawa zastrzeżone.</span>
<span class="t" style="left:508.5px;top:713.0px;font:12px 'Liberation Sans',sans-serif;line-height:1;color:#fff;transform:scaleX(0.967);transform-origin:0 0;">2022-11-09</span>
<span class="t" style="left:578.0px;top:713.0px;font:12px 'Liberation Sans',sans-serif;line-height:1;color:#fff;transform:scaleX(0.905);transform-origin:0 0;">RAZEM NETTO: 0,00 PLN</span>
<span class="t" style="left:974.0px;top:713.0px;font:12px 'Liberation Sans',sans-serif;line-height:1;color:#fff;transform:scaleX(0.900);transform-origin:0 0;">RAZEM BRUTTO: 0,00 PLN</span>
</div>
<div class="layer" id="dialog">
<div style="position:absolute;left:278.4px;top:111.4px;width:815px;height:508.9px;background:#f0f0f0;box-shadow:0 0 1px rgba(0,0,0,.12),0 3px 15px 1px rgba(0,0,0,.33)"></div>
<div style="position:absolute;left:278.4px;top:111.4px;width:815px;height:30.5px;background:#fff"></div>
<span class="t" style="left:308.4px;top:121.0px;font:12px 'Liberation Sans',sans-serif;line-height:1;color:#000;">Lista dokumentów (0)</span>
<span class="t" style="left:290.0px;top:149.0px;font:12px 'Liberation Sans',sans-serif;line-height:1;color:#000;transform:scaleX(1.020);transform-origin:0 0;">Menu opcji dodatkowych</span>
<div style="position:absolute;left:287px;top:174px;width:201px;height:168px;background:#fff;border:1px solid #7a7a7a"></div>
<div style="position:absolute;left:319.9px;top:239.6px;width:153.4px;height:14.2px;background:#ececec"></div>
<span class="t" style="left:306.3px;top:178.0px;font:12px 'DejaVu Sans Condensed',sans-serif;line-height:1;color:#000;transform:scaleX(1.018);transform-origin:0 0;">Listy dokumentów</span>
<span class="t" style="left:306.3px;top:194.0px;font:12px 'DejaVu Sans Condensed',sans-serif;line-height:1;color:#000;transform:scaleX(1.047);transform-origin:0 0;">Faktury JPK</span>
<span class="t" style="left:306.3px;top:210.0px;font:12px 'DejaVu Sans Condensed',sans-serif;line-height:1;color:#000;transform:scaleX(0.958);transform-origin:0 0;">Zamówienia</span>
<span class="t" style="left:322.6px;top:226.0px;font:12px 'DejaVu Sans Condensed',sans-serif;line-height:1;color:#000;">Zamówienia od klientów</span>
<span class="t" style="left:322.6px;top:242.0px;font:12px 'DejaVu Sans Condensed',sans-serif;line-height:1;color:#000;">Zamówienia dla dostawców</span>
<span class="t" style="left:322.6px;top:258.0px;font:12px 'DejaVu Sans Condensed',sans-serif;line-height:1;color:#000;">Zlecenia wewnętrzne</span>
<span class="t" style="left:322.6px;top:274.0px;font:12px 'DejaVu Sans Condensed',sans-serif;line-height:1;color:#000;">Oferty</span>
<span class="t" style="left:306.3px;top:290.0px;font:12px 'DejaVu Sans Condensed',sans-serif;line-height:1;color:#000;transform:scaleX(0.987);transform-origin:0 0;">Rejestry płatności</span>
<span class="t" style="left:495.5px;top:169.0px;font:24px 'DejaVu Sans Condensed',sans-serif;line-height:1;color:#000;transform:scaleX(0.920);transform-origin:0 0;">Zamówienia dla dostawców</span>
<div style="position:absolute;left:495.5px;top:198px;width:596.5px;height:1px;background:#b8b8b8"></div>
<div style="position:absolute;left:495.5px;top:199px;width:596.5px;height:1px;background:#fafafa"></div>
<div style="position:absolute;left:495px;top:205.8px;width:587px;height:343.6px;background:#fff"></div>
<div style="position:absolute;left:495px;top:205.6px;width:74.3px;height:22px;background:linear-gradient(#e9e9e9 0%,#dcdcdc 35%,#cbcbcb 65%,#b9b9b9 100%);border-right:1px solid #a6a6a6"></div>
<div style="position:absolute;left:569.3px;top:205.6px;width:1px;height:22px;background:#fafafa"></div>
<div style="position:absolute;left:569.3px;top:227.5px;width:1px;height:321.9px;background:#eeeeee"></div>
<div style="position:absolute;left:570.3px;top:205.6px;width:74.9px;height:22px;background:linear-gradient(#e9e9e9 0%,#dcdcdc 35%,#cbcbcb 65%,#b9b9b9 100%);border-right:1px solid #a6a6a6"></div>
<div style="position:absolute;left:645.2px;top:205.6px;width:1px;height:22px;background:#fafafa"></div>
<div style="position:absolute;left:645.2px;top:227.5px;width:1px;height:321.9px;background:#eeeeee"></div>
<div style="position:absolute;left:646.2px;top:205.6px;width:127.8px;height:22px;background:linear-gradient(#e9e9e9 0%,#dcdcdc 35%,#cbcbcb 65%,#b9b9b9 100%);border-right:1px solid #a6a6a6"></div>
<div style="position:absolute;left:774px;top:205.6px;width:1px;height:22px;background:#fafafa"></div>
<div style="position:absolute;left:774px;top:227.5px;width:1px;height:321.9px;background:#eeeeee"></div>
<div style="position:absolute;left:775px;top:205.6px;width:75px;height:22px;background:linear-gradient(#e9e9e9 0%,#dcdcdc 35%,#cbcbcb 65%,#b9b9b9 100%);border-right:1px solid #a6a6a6"></div>
<div style="position:absolute;left:850px;top:205.6px;width:1px;height:22px;background:#fafafa"></div>
<div style="position:absolute;left:850px;top:227.5px;width:1px;height:321.9px;background:#eeeeee"></div>
<div style="position:absolute;left:851px;top:205.6px;width:75.2px;height:22px;background:linear-gradient(#e9e9e9 0%,#dcdcdc 35%,#cbcbcb 65%,#b9b9b9 100%);border-right:1px solid #a6a6a6"></div>
<div style="position:absolute;left:926.2px;top:205.6px;width:1px;height:22px;background:#fafafa"></div>
<div style="position:absolute;left:926.2px;top:227.5px;width:1px;height:321.9px;background:#eeeeee"></div>
<div style="position:absolute;left:927.2px;top:205.6px;width:74.8px;height:22px;background:linear-gradient(#e9e9e9 0%,#dcdcdc 35%,#cbcbcb 65%,#b9b9b9 100%);border-right:1px solid #a6a6a6"></div>
<div style="position:absolute;left:1002px;top:205.6px;width:1px;height:22px;background:#fafafa"></div>
<div style="position:absolute;left:1002px;top:227.5px;width:1px;height:321.9px;background:#eeeeee"></div>
<div style="position:absolute;left:1003px;top:205.6px;width:75px;height:22px;background:linear-gradient(#e9e9e9 0%,#dcdcdc 35%,#cbcbcb 65%,#b9b9b9 100%);border-right:1px solid #a6a6a6"></div>
<div style="position:absolute;left:1078px;top:205.6px;width:1px;height:22px;background:#fafafa"></div>
<div style="position:absolute;left:1078px;top:227.5px;width:1px;height:321.9px;background:#eeeeee"></div>
<div style="position:absolute;left:1079px;top:205.6px;width:3px;height:22px;background:linear-gradient(#e9e9e9 0%,#dcdcdc 35%,#cbcbcb 65%,#b9b9b9 100%);border-right:1px solid #a6a6a6"></div>
<span class="t" style="left:499.2px;top:213.0px;font:11px 'DejaVu Sans Condensed',sans-serif;line-height:1;color:#000;transform:scaleX(0.949);transform-origin:0 0;">Data wystawi</span>
<span class="t" style="left:575.7px;top:213.0px;font:11px 'DejaVu Sans Condensed',sans-serif;line-height:1;color:#000;transform:scaleX(0.905);transform-origin:0 0;">Numer</span>
<span class="t" style="left:651.4px;top:213.0px;font:11px 'DejaVu Sans Condensed',sans-serif;line-height:1;color:#000;transform:scaleX(0.942);transform-origin:0 0;">Kontrahent</span>
<span class="t" style="left:780.1px;top:213.0px;font:11px 'DejaVu Sans Condensed',sans-serif;line-height:1;color:#000;transform:scaleX(1.019);transform-origin:0 0;">Wartość</span>
<span class="t" style="left:856.7px;top:213.0px;font:11px 'DejaVu Sans Condensed',sans-serif;line-height:1;color:#000;transform:scaleX(0.939);transform-origin:0 0;">Termin realiz</span>
<span class="t" style="left:932.6px;top:213.0px;font:11px 'DejaVu Sans Condensed',sans-serif;line-height:1;color:#000;transform:scaleX(0.974);transform-origin:0 0;">Do zapłaty</span>
<span class="t" style="left:1008.5px;top:213.0px;font:11px 'DejaVu Sans Condensed',sans-serif;line-height:1;color:#000;transform:scaleX(0.983);transform-origin:0 0;">Nazwa dok</span>
<div style="position:absolute;left:495px;top:549px;width:587px;height:16.5px;background:#fff;border-top:1px solid #8e8e8e;border-bottom:1px solid #9c9c9c"></div>
<div style="position:absolute;left:495px;top:549px;width:16px;height:17px;background:#f0eff1;border-bottom:2px solid #747474;border-top:1px solid #d4d4d4;border-right:1px solid #6e6e6e"></div>
<div style="position:absolute;left:511px;top:549px;width:71px;height:17px;background:#f0eff1;border-bottom:2px solid #747474;border-top:1px solid #d4d4d4;border-left:1px solid #fff;border-right:2px solid #6e6e6e"></div>
<div style="position:absolute;left:1065px;top:549px;width:17px;height:17px;background:#f0eff1;border-bottom:2px solid #747474;border-top:1px solid #d4d4d4;border-left:1px solid #d0d0d0;border-right:1px solid #6e6e6e"></div>
<div style="position:absolute;left:287px;top:351px;width:13px;height:13px;background:#fff;border:1px solid #333"></div>
<span class="t" style="left:303.6px;top:352.0px;font:12px 'DejaVu Sans Condensed',sans-serif;line-height:1;color:#000;transform:scaleX(0.955);transform-origin:0 0;">Wszystkie</span>
<div style="position:absolute;left:287px;top:372px;width:13px;height:13px;background:#fff;border:1px solid #333"></div>
<span class="t" style="left:303.6px;top:373.0px;font:12px 'DejaVu Sans Condensed',sans-serif;line-height:1;color:#000;">Płatne przelewem</span>
<div style="position:absolute;left:287px;top:392px;width:13px;height:13px;background:#fff;border:1px solid #333"></div>
<span class="t" style="left:303.6px;top:393.0px;font:12px 'DejaVu Sans Condensed',sans-serif;line-height:1;color:#000;transform:scaleX(1.054);transform-origin:0 0;">Gotówkowe</span>
<div style="position:absolute;left:287px;top:412px;width:13px;height:13px;background:#fff;border:1px solid #333"></div>
<span class="t" style="left:303.6px;top:413.0px;font:12px 'DejaVu Sans Condensed',sans-serif;line-height:1;color:#000;">Inne spos. zapłaty</span>
<div style="position:absolute;left:287px;top:432px;width:13px;height:13px;background:#fff;border:1px solid #333"></div>
<span class="t" style="left:303.6px;top:433.0px;font:12px 'DejaVu Sans Condensed',sans-serif;line-height:1;color:#000;transform:scaleX(0.952);transform-origin:0 0;">Rozliczone</span>
<div style="position:absolute;left:287px;top:452px;width:13px;height:13px;background:#fff;border:1px solid #333"></div>
<span class="t" style="left:303.6px;top:453.0px;font:12px 'DejaVu Sans Condensed',sans-serif;line-height:1;color:#000;transform:scaleX(0.948);transform-origin:0 0;">Nierozliczone</span>
<div style="position:absolute;left:287px;top:472px;width:13px;height:13px;background:#fff;border:1px solid #333"></div>
<span class="t" style="left:303.6px;top:473.0px;font:12px 'DejaVu Sans Condensed',sans-serif;line-height:1;color:#000;">Split Payment</span>
<div style="position:absolute;left:287.1px;top:585.4px;width:13px;height:13px;background:#fff;border:1px solid #333"></div>
<span class="t" style="left:302.5px;top:587.0px;font:11px 'DejaVu Sans Condensed',sans-serif;line-height:1;color:#000;transform:scaleX(0.964);transform-origin:0 0;">Pokaż to okno przy starcie programu</span>
<span class="t" style="left:286.6px;top:498.0px;font:11px 'DejaVu Sans Condensed',sans-serif;line-height:1;color:#000;transform:scaleX(0.984);transform-origin:0 0;">Kontrahent</span>
<span class="t" style="left:286.6px;top:521.0px;font:11px 'DejaVu Sans Condensed',sans-serif;line-height:1;color:#000;transform:scaleX(0.971);transform-origin:0 0;">Pokaż</span>
<div style="position:absolute;left:342.1px;top:490px;width:138.7px;height:20.8px;background:#fff;border:1px solid #606060;box-shadow:0 0 0 .5px #b0b0b0"></div>
<div style="position:absolute;left:461.2px;top:493px;width:16.8px;height:15.3px;background:#dcdcdc;border:1px solid #fff;box-shadow:0 0 0 1px #8a8a8a"></div>
<span class="t" style="left:350.3px;top:496.0px;font:11px 'DejaVu Sans',sans-serif;line-height:1;color:#000;">Nabywca</span>
<div style="position:absolute;left:342.1px;top:517.4px;width:138.7px;height:20.4px;background:#fff;border:1px solid #606060;box-shadow:0 0 0 .5px #b0b0b0"></div>
<div style="position:absolute;left:461.2px;top:520.4px;width:16.8px;height:14.9px;background:#dcdcdc;border:1px solid #fff;box-shadow:0 0 0 1px #8a8a8a"></div>
<span class="t" style="left:350.3px;top:523.0px;font:11px 'DejaVu Sans',sans-serif;line-height:1;color:#000;transform:scaleX(1.030);transform-origin:0 0;">Bieżący miesiąc</span>
<div style="position:absolute;left:349.8px;top:494px;width:1.2px;height:12.8px;background:#1a1a6a"></div>
<span class="t" style="left:287.7px;top:539.0px;font:12px 'DejaVu Sans Condensed',sans-serif;line-height:1;color:#9a9a9a;transform:scaleX(0.944);transform-origin:0 0;">Od</span>
<span class="t" style="left:399.5px;top:539.0px;font:12px 'DejaVu Sans Condensed',sans-serif;line-height:1;color:#9a9a9a;transform:scaleX(0.932);transform-origin:0 0;">Do</span>
<div style="position:absolute;left:287.1px;top:550.7px;width:79.2px;height:18.9px;background:#f0f0f0;border:2px solid;border-color:#7e7e7e #fafafa #fafafa #7e7e7e;box-shadow:inset 1px 1px 0 #b4b4b4"></div>
<div style="position:absolute;left:349.8px;top:552.7px;width:14.8px;height:15.3px;background:#ececec;border:1px solid;border-color:#fafafa #8c8c8c #8c8c8c #fafafa"></div>
<span class="t" style="left:290.7px;top:556.0px;font:11px 'DejaVu Sans Condensed',sans-serif;line-height:1;color:#9b9b9b;transform:scaleX(0.979);transform-origin:0 0;">09-11-2022</span>
<div style="position:absolute;left:399.5px;top:550.7px;width:78.8px;height:18.9px;background:#f0f0f0;border:2px solid;border-color:#7e7e7e #fafafa #fafafa #7e7e7e;box-shadow:inset 1px 1px 0 #b4b4b4"></div>
<div style="position:absolute;left:461.8px;top:552.7px;width:14.8px;height:15.3px;background:#ececec;border:1px solid;border-color:#fafafa #8c8c8c #8c8c8c #fafafa"></div>
<span class="t" style="left:403.1px;top:556.0px;font:11px 'DejaVu Sans Condensed',sans-serif;line-height:1;color:#9b9b9b;transform:scaleX(0.979);transform-origin:0 0;">09-11-2022</span>
<div style="position:absolute;left:495.2px;top:584.3px;width:96.7px;height:24.3px;background:#eeeef0;border:1px solid #d3d3d6"></div>
<div style="position:absolute;left:607.1px;top:584.3px;width:88.6px;height:24.3px;background:#eeeef0;border:1px solid #d3d3d6"></div>
<div style="position:absolute;left:703.2px;top:584.3px;width:96.5px;height:24.3px;background:#eeeef0;border:1px solid #d3d3d6"></div>
<div style="position:absolute;left:807.2px;top:584.3px;width:24.6px;height:24.3px;background:#eeeef0;border:1px solid #d3d3d6"></div>
<div style="position:absolute;left:839.1px;top:584.3px;width:24.6px;height:24.3px;background:#eeeef0;border:1px solid #d3d3d6"></div>
<div style="position:absolute;left:911.4px;top:584.3px;width:64.3px;height:24.3px;background:#eeeef0;border:1px solid #cfcfd2"></div>
<div style="position:absolute;left:985.2px;top:584.2px;width:97px;height:24.8px;background:#f0f0f2;border:2px solid #2a8ad4"></div>
<span class="t" style="left:532.2px;top:591.0px;font:12px 'DejaVu Sans Condensed',sans-serif;line-height:1;color:#a2a2a2;transform:scaleX(1.027);transform-origin:0 0;">Popraw</span>
<span class="t" style="left:634.1px;top:591.0px;font:12px 'DejaVu Sans Condensed',sans-serif;line-height:1;color:#a2a2a2;transform:scaleX(0.920);transform-origin:0 0;">Rozlicz</span>
<span class="t" style="left:743.5px;top:591.0px;font:12px 'DejaVu Sans Condensed',sans-serif;line-height:1;color:#a2a2a2;transform:scaleX(0.968);transform-origin:0 0;">Drukuj</span>
<span class="t" style="left:939.0px;top:591.0px;font:12px 'DejaVu Sans Condensed',sans-serif;line-height:1;color:#000;transform:scaleX(0.963);transform-origin:0 0;">Usuń</span>
<span class="t" style="left:1025.6px;top:591.0px;font:12px 'DejaVu Sans Condensed',sans-serif;line-height:1;color:#000;">OK</span>
<div style="position:absolute;left:634.3px;top:603px;width:6.2px;height:1px;background:#a2a2a2"></div>
<div style="position:absolute;left:751.5px;top:603px;width:4.5px;height:1px;background:#a2a2a2"></div>
<div style="position:absolute;left:939.3px;top:602.5px;width:7.2px;height:1px;background:#000"></div>
<div style="position:absolute;left:1025.8px;top:602.5px;width:7.8px;height:1px;background:#000"></div>
<svg style="position:absolute;left:0;top:0" width="1366" height="730" viewBox="0 0 1366 730">
<!-- title icon -->
<g transform="translate(283 114) scale(.5)">
<path d="M19 14 h14 l2 1.500 v19 h-16z" fill="#e6e6ea" stroke="#9a9aa8" stroke-width=".700"/>
<path d="M15.500 12.800 h16.500 l1.500 1.500 v20.500 h-18z" fill="#fafafc" stroke="#9a9aa8" stroke-width=".800"/>
<rect x="17" y="12.400" width="6" height="3.200" fill="#2446c8"/><path d="M18.400 12.300 v-1.500 q1.600 -3 3.200 0 v1.500" fill="none" stroke="#4a5a8a" stroke-width="1"/>
<path d="M24.500 15.500 h6" stroke="#9ab" stroke-width=".800"/>
<path d="M18 19.500 h13.500 M18 22 h13.500 M18 24.500 h13.500 M18 27 h13.500 M20.500 18.500 v9 M23.500 18.500 v9 M26.500 18.500 v9 M29.500 18.500 v9" stroke="#cf8f9f" stroke-width=".700"/>
<path d="M18 29.500 h13.500 M18 31.500 h13.500 M18 33.500 h13.500" stroke="#b9b9bf" stroke-width=".800"/>
<path d="M9.800 27 q.200 -5.500 3.300 -6 q2.500 0 4.500 2.800 l3.300 -1.500 l.500 1.200 l-2.800 3 l-2.600 6.500 l-5.200 -1.800z" fill="#d9b02a" stroke="#8f7010" stroke-width=".600"/>
<path d="M38.500 27 q-.200 -5.500 -3.300 -6 q-2.500 0 -4.500 2.800 l-3.300 -1.500 l-.500 1.200 l2.800 3 l2.600 6.500 l5.200 -1.800z" fill="#d9b02a" stroke="#8f7010" stroke-width=".600"/>
<path d="M8.600 30 l7.700 3.500 l-1.800 4.400 l-6.700 -5z M39.800 30.500 l-7.700 3.300 l1.600 4.200 l6.700 -4.800z" fill="#141414"/>
</g>
<!-- caption buttons -->
<g stroke="#000" stroke-width="1.100" fill="none"><path d="M974 126.400 h10"/><rect x="1019.300" y="121.600" width="9.400" height="9.200"/><path d="M1065.200 121.300 l9.700 9.600 M1074.900 121.300 l-9.700 9.600"/></g>
<!-- tree lines -->
<g stroke="#8a8a8a" stroke-width="1" stroke-dasharray="1 1" fill="none"><path d="M296.500 188 v103 M301 183.500 h4 M297 199.500 h8 M301 215.500 h4 M301 295.500 h4 M312.500 222 v57.500 M313 231.500 h7 M313 247.500 h7 M313 263.500 h7 M313 279.500 h7"/></g>
<g fill="#fff" stroke="#7b7b7b" stroke-width="1"><rect x="292.500" y="179.500" width="8" height="8"/><rect x="292.500" y="211.500" width="8" height="8"/><rect x="292.500" y="291.500" width="8" height="8"/></g>
<g stroke="#000" stroke-width="1"><path d="M294 183.500 h5 M296.500 181 v5 M294 215.500 h5 M294 295.500 h5 M296.500 293 v5"/></g>
<!-- check marks -->
<g fill="none" stroke="#222" stroke-width="1.300" id="chk"><path d="M289.600 357.600 l3 3 l5.300 -6"/><path d="M289.600 378.600 l3 3 l5.300 -6"/><path d="M289.600 398.600 l3 3 l5.300 -6"/><path d="M289.600 418.600 l3 3 l5.300 -6"/><path d="M289.600 438.600 l3 3 l5.300 -6"/><path d="M289.600 458.600 l3 3 l5.300 -6"/><path d="M289.600 478.600 l3 3 l5.300 -6"/></g>
<!-- combo arrows -->
<path d="M466 498.600 h7.200 l-3.600 3.800z M466 526.200 h7.200 l-3.600 3.800z" fill="#000"/>
<path d="M353.800 558.900 h7 l-3.500 3.700z M466 558.900 h7 l-3.500 3.700z" fill="#9a9a9a"/>
<!-- scrollbar arrows -->
<path d="M504 553.500 v7.400 l-4 -3.700z M1071.500 553.500 v7.400 l4 -3.700z" fill="#000"/>
<!-- button icons -->
<g fill="#a3a3a3"><path d="M513 588.500 h8 l1 1 l4 -1.500 l2.700 2.500 l-6.500 8.500 v4.800 h-9.200z"/><path d="M724.500 592 h4.500 v-4 h6.500 v4 h4.700 v7 h-4.700 v3.500 h-6.500 v-3.500 h-4.500z"/></g>
<path d="M519.500 591 l4.500 -3 l2 2 l-5.500 6.500z" fill="#eeeef0" opacity=".7"/>
<g fill="#111"><path d="M811.600 601.500 q-.600 -4 1.600 -8.500 l1.300 -3.200 q1 -1 2 0 l.700 3.500 l.600 8 q-.500 2 -3.200 2 q-2.600 0 -3 -1.800z M826.200 601.500 q.600 -4 -1.600 -8.500 l-1.300 -3.200 q-1 -1 -2 0 l-.700 3.500 l-.600 8 q.500 2 3.200 2 q2.600 0 3 -1.800z"/><rect x="817" y="593" width="3.800" height="3.500"/></g>
<path d="M814.300 592.500 l-1 7.500 M823.500 592.500 l1 7.500" stroke="#fff" stroke-width="1"/>
<g fill="#fff" stroke="#333" stroke-width=".800"><rect x="844.300" y="591.900" width="13.600" height="9.700"/><path d="M844.300 591.900 l6.800 5.600 l6.800 -5.600 M844.300 601.600 l5 -4.800 M857.900 601.600 l-5 -4.800" fill="none"/></g>
<g><path d="M920 588.500 h8 l4 4 v11 h-12z" fill="#fbfbfb" stroke="#9a9a9a" stroke-width=".800"/><path d="M922 592.500 h6 M922 595 h7 M922 597.500 h4 M922 600 h3" stroke="#b7b7b7" stroke-width=".800"/><rect x="926" y="597" width="10" height="4.600" fill="#e23a2a" stroke="#a8180e" stroke-width=".600"/><rect x="927.800" y="598.700" width="6.400" height="1.200" fill="#fff"/></g>
</svg>
</div>
</body>
</html>
